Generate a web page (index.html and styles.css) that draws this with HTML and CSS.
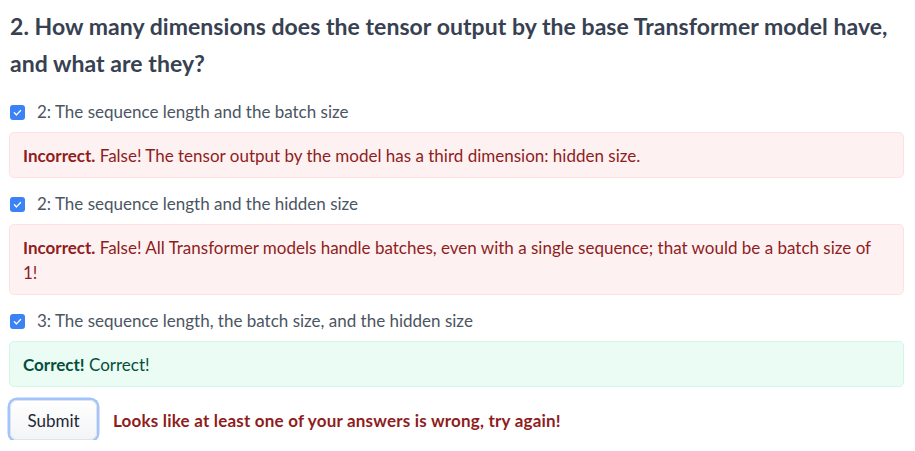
FILE: index.html
```html
<!DOCTYPE html>
<html>
<head>
<meta charset="utf-8">
<link rel="stylesheet" href="styles.css">
</head>
<body>
<div class="quiz">
  <h2 class="question">2. How many dimensions does the tensor output by the base Transformer model have, and what are they?</h2>
  <div class="options">
    <label class="option">
      <span class="check"><svg viewBox="0 0 16 16" width="11" height="11"><path d="M3.5 8.5l3 3 6-6.5" fill="none" stroke="#fff" stroke-width="2" stroke-linecap="round" stroke-linejoin="round"/></svg></span>
      <span class="option-text">2: The sequence length and the batch size</span>
    </label>
    <div class="feedback wrong"><strong>Incorrect.</strong> False! The tensor output by the model has a third dimension: hidden size.</div>

    <label class="option">
      <span class="check"><svg viewBox="0 0 16 16" width="11" height="11"><path d="M3.5 8.5l3 3 6-6.5" fill="none" stroke="#fff" stroke-width="2" stroke-linecap="round" stroke-linejoin="round"/></svg></span>
      <span class="option-text">2: The sequence length and the hidden size</span>
    </label>
    <div class="feedback wrong"><strong>Incorrect.</strong> False! All Transformer models handle batches, even with a single sequence; that would be a batch size of 1!</div>

    <label class="option">
      <span class="check"><svg viewBox="0 0 16 16" width="11" height="11"><path d="M3.5 8.5l3 3 6-6.5" fill="none" stroke="#fff" stroke-width="2" stroke-linecap="round" stroke-linejoin="round"/></svg></span>
      <span class="option-text">3: The sequence length, the batch size, and the hidden size</span>
    </label>
    <div class="feedback right"><strong>Correct!</strong> Correct!</div>
  </div>
  <div class="actions">
    <button class="submit">Submit</button>
    <span class="result">Looks like at least one of your answers is wrong, try again!</span>
  </div>
</div>
</body>
</html>
```

FILE: styles.css
```css
html, body {
  margin: 0;
  padding: 0;
  background: #ffffff;
}
body {
  font-family: "Lato", "Liberation Sans", sans-serif;
  font-size: 17px;
  color: #4b5563;
}
.quiz {
  padding: 8px 11px 0 9px;
}
.question {
  margin: 0 0 18px 1px;
  font-size: 23px;
  line-height: 37px;
  font-weight: 700;
  color: #374151;
  letter-spacing: 0.05px;
}
.options {
  display: flex;
  flex-direction: column;
}
.option {
  display: flex;
  align-items: center;
  height: 24px;
  margin-left: 1px;
}
.check {
  width: 15px;
  height: 15px;
  border-radius: 3px;
  background: #3b82f6;
  display: flex;
  align-items: center;
  justify-content: center;
  flex: none;
}
.option-text {
  margin-left: 12px;
  color: #4b5563;
  line-height: 24px;
}
.feedback {
  margin: 8px 0 14px;
  padding: 10px 18px 9px 13px;
  border-radius: 5px;
  border: 1px solid;
  line-height: 25px;
}
.feedback.wrong {
  background: #fef1f2;
  border-color: #fde2e4;
  color: #8f1d1d;
}
.feedback.right {
  background: #eafcf3;
  border-color: #d3f7e6;
  color: #064e3b;
  margin-bottom: 13px;
}
.feedback strong {
  font-weight: 700;
}
.actions {
  display: flex;
  align-items: center;
  gap: 16px;
}
.submit {
  font-family: inherit;
  font-size: 17px;
  color: #1f2937;
  background: linear-gradient(#ffffff, #f3f4f6);
  border: 1px solid #dfe3ea;
  border-radius: 7px;
  width: 87px;
  height: 40px;
  margin: 0 0 0 1px;
  box-shadow: 0 0 0 2.5px #a3c4fa;
  padding: 0;
}
.result {
  font-weight: 700;
  color: #8f1d1d;
  letter-spacing: 0.2px;
}
```
